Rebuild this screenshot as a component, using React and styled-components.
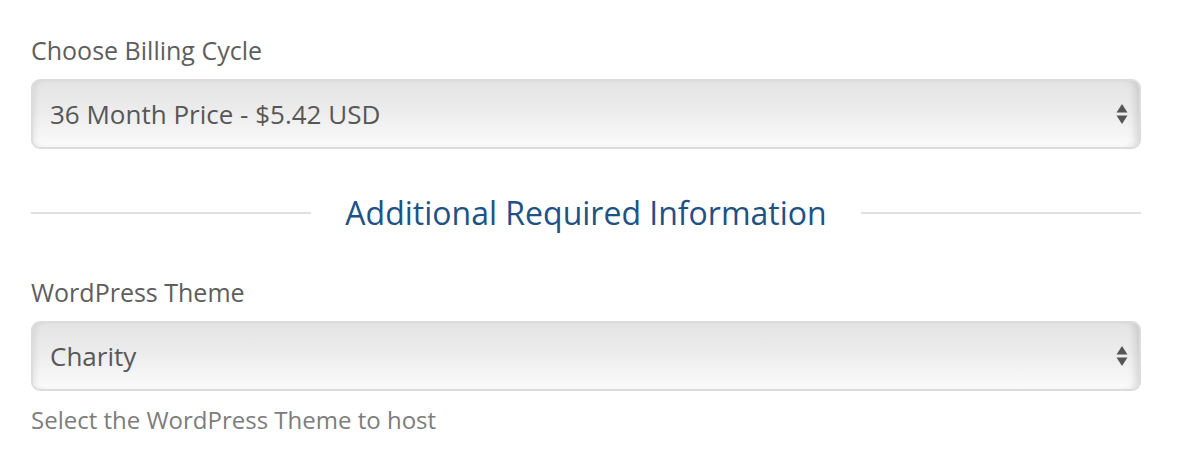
import React from 'react'
import styled, { createGlobalStyle } from 'styled-components'

const GlobalStyle = createGlobalStyle`
  body {
    margin: 0;
    background: #fff;
    font-family: "Open Sans", "Noto Sans", sans-serif;
  }
`;

const Form = styled.div`
  width: 1110px;
  margin-left: 31px;
  padding-top: 33px;
`;

const Field = styled.div`
  display: flex;
  flex-direction: column;
`;

const Label = styled.label`
  font-size: 25px;
  line-height: 34px;
  color: #5e5e5e;
  margin-bottom: 12px;
`;

const SelectBox = styled.div`
  height: 70px;
  box-sizing: border-box;
  border: 2px solid #dcdcdc;
  border-radius: 9px;
  background: linear-gradient(to bottom, #e4e4e4 0%, #ececec 45%, #fbfbfb 100%);
  box-shadow: inset 6px 0 6px -4px rgba(0, 0, 0, 0.08), inset -8px 0 8px -5px rgba(0, 0, 0, 0.14);
  display: flex;
  align-items: center;
  padding: 0 11px 0 17px;
  font-size: 26px;
  color: #575757;
`;

const Value = styled.span`
  flex: 1;
`;

const Arrows = styled.svg`
  width: 12px;
  height: 22px;
`;

const Divider = styled.div`
  display: flex;
  align-items: center;
  gap: 34px;
  margin: 42px 0 40px;
`;

const Rule = styled.div`
  flex: 1;
  height: 2px;
  background: #e0e0e0;
`;

const Heading = styled.h2`
  margin: 0;
  font-size: 32px;
  font-weight: 400;
  line-height: 44px;
  color: #1e5285;
`;

const Help = styled.p`
  margin: 13px 0 0;
  font-size: 24px;
  line-height: 32px;
  color: #7d7d7d;
`;

function Select({ value }) {
  return (
    <SelectBox>
      <Value>{value}</Value>
      <Arrows viewBox="0 0 12 22">
        <path d="M6 1 L11.5 9.5 L0.5 9.5 Z" fill="#555" />
        <path d="M0.5 12.5 L11.5 12.5 L6 21 Z" fill="#555" />
      </Arrows>
    </SelectBox>
  );
}

export default function App() {
  return (
    <>
      <GlobalStyle />
      <Form>
        <Field>
          <Label>Choose Billing Cycle</Label>
          <Select value="36 Month Price - $5.42 USD" />
        </Field>
        <Divider>
          <Rule />
          <Heading>Additional Required Information</Heading>
          <Rule />
        </Divider>
        <Field>
          <Label>WordPress Theme</Label>
          <Select value="Charity" />
          <Help>Select the WordPress Theme to host</Help>
        </Field>
      </Form>
    </>
  );
}
